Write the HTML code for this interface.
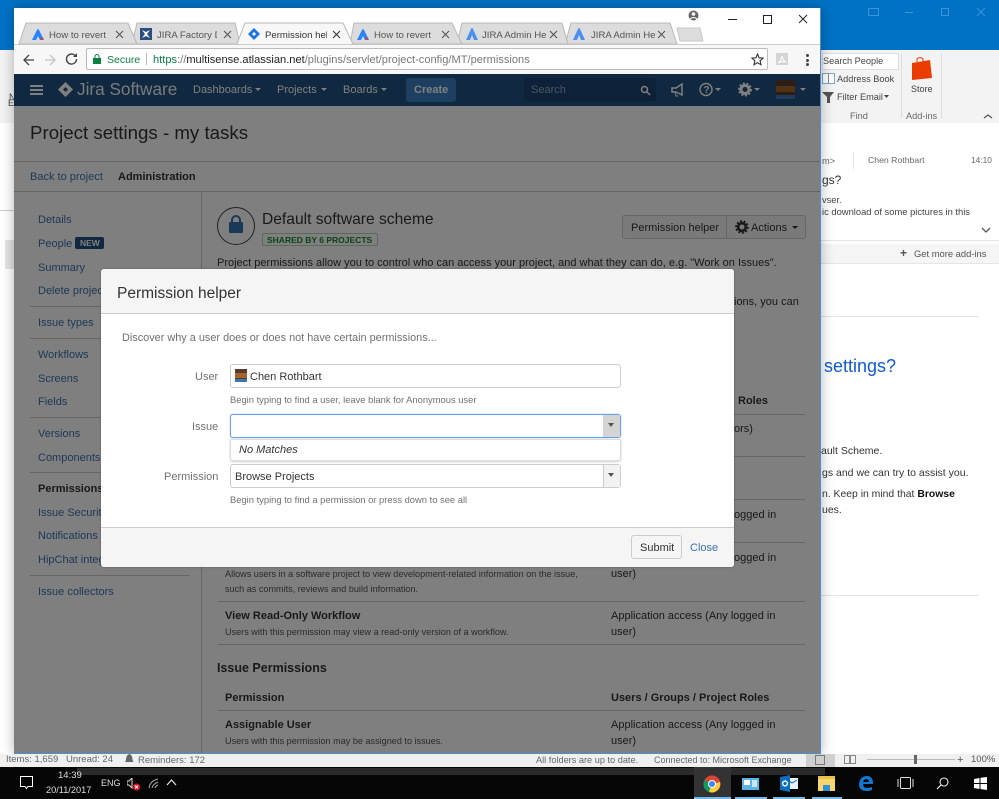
<!DOCTYPE html>
<html><head><meta charset="utf-8"><title>Permission helper</title>
<style>
html,body{margin:0;padding:0;width:999px;height:799px;overflow:hidden;background:#fff;font-family:"Liberation Sans",sans-serif}
div,span,a,svg{position:absolute;box-sizing:border-box}
span span,b span,i span{position:static}
.t{white-space:nowrap;line-height:14px;font-size:12px;color:#333;margin-top:1px}
.o{color:#444;font-size:9.3px}
.s{color:#666;font-size:9.2px;top:752px}
.tab{height:13px;line-height:13px;font-size:9.6px;top:28px;color:#555;overflow:hidden}
.k{margin-top:0;color:#ddd}
.l{color:#3b73af}
.h{height:1px;background:#ccc}
.d{font-size:9.1px;color:#555}
.n{font-weight:bold;font-size:11px;color:#333}
.f{font-size:9.4px;color:#707070}
.tb{background:#fff;border:1px solid #ccc;border-radius:3px}
</style></head><body>
<!-- Outlook behind -->
<div style="left:0;top:0;width:999px;height:50px;background:#0072c6"></div>
<div style="left:0;top:50px;width:999px;height:73px;background:#f3f3f3"></div>
<div style="left:0;top:123px;width:999px;height:631px;background:#fff"></div>
<div style="left:0;top:210px;width:14px;height:1px;background:#ccc"></div>
<div style="left:5px;top:240px;width:9px;height:29px;background:#e4e4e4"></div>
<span class="t o" style="left:9px;top:89px;font-size:9px">N</span><span class="t o" style="left:8px;top:95px;font-size:9px">E</span>
<div style="left:822px;top:53px;width:77px;height:17px;background:#fff;border:1px solid #ddd"></div>
<span class="t o" style="left:823px;top:53px;font-size:9.200px">Search People</span>
<span class="t o" style="left:837px;top:71px;font-size:9.200px">Address Book</span>
<span class="t o" style="left:837px;top:89px;font-size:9.200px">Filter Email</span>
<svg style="left:884px;top:95px" width="6" height="4"><path d="M0 0h5L2.500 3z" fill="#444"/></svg>
<svg style="left:822px;top:73px" width="13" height="12"><rect x=".5" y=".5" width="12" height="10" fill="#fff" stroke="#7aa6cc"/><path d="M6.500 1v9" stroke="#888"/></svg>
<svg style="left:822px;top:91px" width="13" height="12"><path d="M0 1h12L8 6v6H5V6z" fill="#555"/></svg>
<span class="t o" style="left:850px;top:108px;color:#666;font-size:9.200px">Find</span>
<span class="t o" style="left:906px;top:108px;color:#666;font-size:9.200px">Add-ins</span>
<span class="t o" style="left:911px;top:81px;font-size:9px">Store</span>
<div style="left:901px;top:54px;width:1px;height:64px;background:#ddd"></div>
<div style="left:941px;top:54px;width:1px;height:64px;background:#ddd"></div>
<svg style="left:910px;top:55px" width="23" height="26"><path d="M2 8L20 5l2 18-20 2z" fill="#eb3c00"/><path d="M7 7V4q3-3 6 0v3" stroke="#eb3c00" fill="none"/></svg>
<svg style="left:982px;top:112px" width="12" height="8"><path d="M2 6l4-3 4 3" stroke="#555" stroke-width="1.300" fill="none"/></svg>
<div style="left:868px;top:8px;width:11px;height:8px;border:1px solid #3f93d6"></div>
<div style="left:905px;top:12px;width:8px;height:1px;background:#3f93d6"></div>
<div style="left:941px;top:8px;width:8px;height:8px;border:1px solid #3f93d6"></div>
<svg style="left:976px;top:7px" width="10" height="10"><path d="M1 1l8 8M9 1L1 9" stroke="#3f93d6"/></svg>

<span class="t o" style="left:822px;top:153px;color:#666">m&gt;</span>
<div style="left:853px;top:152px;width:1px;height:17px;background:#e5e5e5"></div>
<span class="t o" style="left:868px;top:152px;color:#666;font-size:8.700px">Chen Rothbart</span>
<span class="t o" style="left:971px;top:152px;color:#666;font-size:8.400px">14:10</span>
<span class="t o" style="left:822px;top:172px;font-size:12px;color:#333">gs?</span>
<span class="t o" style="left:822px;top:192px">vser.</span>
<span class="t o" style="left:822px;top:204px;font-size:9.400px">ic download of some pictures in this</span>
<svg style="left:980px;top:226px" width="12" height="8"><path d="M2 2l4 4 4-4" stroke="#555" stroke-width="1.300" fill="none"/></svg>
<div class="h" style="left:821px;top:240px;width:178px;background:#e6e6e6"></div>
<div style="left:821px;top:244px;width:178px;height:20px;background:#f5f5f5;border-bottom:1px solid #e6e6e6"></div>
<span class="t o" style="left:900px;top:245px;color:#555;font-size:12px;font-weight:bold">+</span>
<span class="t o" style="left:914px;top:246px;color:#555;font-size:9.400px">Get more add-ins</span>
<div class="h" style="left:821px;top:316px;width:158px;background:#e4e4e4"></div>
<span class="t o" style="left:824px;top:354px;font-size:18px;line-height:22px;color:#0f5bd0">settings?</span>
<span class="t o" style="left:821px;top:443px;color:#333;font-size:10.500px">ault Scheme.</span>
<span class="t o" style="left:822px;top:465px;color:#333;font-size:10.500px">gs and we can try to assist you.</span>
<span class="t o" style="left:822px;top:487px;color:#333;font-size:10.400px">n. Keep in mind that <b style="color:#111">Browse</b></span>
<span class="t o" style="left:822px;top:502px;color:#333;font-size:10.500px">ues.</span>
<div class="h" style="left:821px;top:595px;width:158px;background:#e4e4e4"></div>

<!-- Chrome -->
<div style="left:14px;top:8px;width:807px;height:746px;background:#fff;border-right:1px solid #4a90d0;box-shadow:0 0 12px rgba(0,0,0,.3)"></div>
<div style="left:14px;top:44px;width:806px;height:1px;background:#cfcfcf"></div>
<div style="left:14px;top:45px;width:806px;height:29px;background:#f7f7f7"></div>

<!-- tabs -->
<svg style="left:14px;top:22px" width="700" height="24">
<g fill="#dcdcdc" stroke="#b8b8b8">
<path d="M551 22L557 1H656L663 22z"/>
<path d="M443 22L448 1H548L554 22z"/>
<path d="M336 22L340 1H438L448 22z"/>
<path d="M118 22L123 1H221L226 22z"/>
<path d="M5 22L12 1H114L123 22z"/>
</g>
<path d="M223 22L231 1H329L339 22" fill="#f7f7f7" stroke="#b8b8b8"/>
<path d="M666 19L663 6H686L689 19z" fill="#dcdcdc" stroke="#c8c8c8"/>
</svg>
<span class="t tab" style="left:49px;width:58px">How to revert</span>
<span class="t tab" style="left:157px;width:60px">JIRA Factory De</span>
<span class="t tab" style="left:265px;width:62px;color:#333">Permission help</span>
<span class="t tab" style="left:374px;width:58px">How to revert</span>
<span class="t tab" style="left:482px;width:64px">JIRA Admin He</span>
<span class="t tab" style="left:591px;width:64px">JIRA Admin He</span>
<svg style="left:32px;top:28px" width="12" height="12"><path d="M0 12L5 2q1-2 2 0l5 10H8L6 8l-2 4z" fill="#2684ff"/><circle cx="10" cy="10.500" r="1.300" fill="#e33"/></svg>
<svg style="left:357px;top:28px" width="12" height="12"><path d="M0 12L5 2q1-2 2 0l5 10H8L6 8l-2 4z" fill="#2684ff"/><circle cx="10" cy="10.500" r="1.300" fill="#e33"/></svg>
<svg style="left:466px;top:27px" width="13" height="13"><path d="M0 13L5 2q1-2 2 0l5 11H8L6 8l-2 5z" fill="#4b8ff0"/></svg>
<svg style="left:573px;top:27px" width="13" height="13"><path d="M0 13L5 2q1-2 2 0l5 11H8L6 8l-2 5z" fill="#4b8ff0"/></svg>
<div style="left:140px;top:28px;width:12px;height:12px;background:#2a4f7c"></div>
<svg style="left:140px;top:28px" width="12" height="12"><path d="M2 2l3 4-3 4 4-2 4 2-3-4 3-4-4 2z" fill="#fff"/></svg>
<svg style="left:248px;top:28px" width="12" height="12"><path d="M6 0l6 6-6 6-6-6z" fill="#1a73e8"/><path d="M6 4l2 2-2 2-2-2z" fill="#fff"/></svg>
<svg style="left:115px;top:30px" width="9" height="9"><path d="M1 1l7 7M8 1L1 8" stroke="#555" stroke-width="1.100"/></svg>
<svg style="left:223px;top:30px" width="9" height="9"><path d="M1 1l7 7M8 1L1 8" stroke="#555" stroke-width="1.100"/></svg>
<svg style="left:332px;top:30px" width="9" height="9"><path d="M1 1l7 7M8 1L1 8" stroke="#333" stroke-width="1.100"/></svg>
<svg style="left:441px;top:30px" width="9" height="9"><path d="M1 1l7 7M8 1L1 8" stroke="#555" stroke-width="1.100"/></svg>
<svg style="left:549px;top:30px" width="9" height="9"><path d="M1 1l7 7M8 1L1 8" stroke="#555" stroke-width="1.100"/></svg>
<svg style="left:657px;top:30px" width="9" height="9"><path d="M1 1l7 7M8 1L1 8" stroke="#555" stroke-width="1.100"/></svg>
<!-- window controls -->
<svg style="left:688px;top:10px" width="11" height="11"><circle cx="5.500" cy="5.500" r="5" fill="#666"/><circle cx="5.500" cy="4" r="1.800" fill="#fff"/><path d="M2 9q3.500-3 7 0" stroke="#fff" fill="none"/></svg>
<div style="left:728px;top:19px;width:9px;height:1px;background:#222"></div>
<div style="left:763px;top:15px;width:9px;height:9px;border:1px solid #222"></div>
<svg style="left:798px;top:14px" width="10" height="10"><path d="M1 1l8 8M9 1L1 9" stroke="#222"/></svg>
<!-- toolbar -->
<svg style="left:22px;top:53px" width="70" height="14"><path d="M2 7h10M7 2L2 7l5 5" stroke="#444" stroke-width="1.300" fill="none"/><path d="M23 7h10M28 2l5 5-5 5" stroke="#c4c4c4" stroke-width="1.300" fill="none"/></svg>
<svg style="left:65px;top:52px" width="14" height="14"><path d="M11.500 7a5 5 0 1 1-1.500-3.500" stroke="#444" stroke-width="1.400" fill="none"/><path d="M12 1v4H8z" fill="#444"/></svg>
<div style="left:86px;top:48px;width:682px;height:22px;background:#fff;border:1px solid #bbb;border-radius:2px"></div>
<svg style="left:93px;top:54px" width="9" height="10"><rect y="4" width="8" height="6" fill="#0b8043"/><path d="M2 4V2.500a2 2 0 0 1 4 0V4" stroke="#0b8043" fill="none"/></svg>
<span class="t" style="left:107px;top:52px;font-size:10.500px;color:#0b8043">Secure</span>
<div style="left:146px;top:53px;width:1px;height:12px;background:#bbb"></div>
<span class="t" style="left:153px;top:52px;font-size:11.100px;color:#777"><span style="color:#0b8043">https</span>://<span style="color:#222">multisense.atlassian.net</span>/plugins/servlet/project-config/MT/permissions</span>
<svg style="left:751px;top:53px" width="13" height="13"><path d="M6.500 1l1.600 3.800 4 .3-3 2.700.9 4L6.500 9.700 3 11.800l.9-4-3-2.700 4-.3z" fill="none" stroke="#333" stroke-width="1.100"/></svg>
<div style="left:776px;top:53px;width:12px;height:12px;background:#d4d4d4"></div>
<svg style="left:776px;top:53px" width="12" height="12"><path d="M2 10q3-2 4-7 1 5 4 6-5-1-8 1z" fill="none" stroke="#fff"/></svg>
<div style="left:806px;top:54px;width:3px;height:3px;background:#444;border-radius:2px"></div>
<div style="left:806px;top:59px;width:3px;height:3px;background:#444;border-radius:2px"></div>
<div style="left:806px;top:63px;width:3px;height:3px;background:#444;border-radius:2px"></div>

<!-- Jira page -->
<div style="left:14px;top:74px;width:806px;height:32px;background:#205081"></div>
<div style="left:14px;top:106px;width:806px;height:648px;background:#fff"></div>
<div style="left:30px;top:85px;width:13px;height:2px;background:#fff"></div><div style="left:30px;top:89px;width:13px;height:2px;background:#fff"></div><div style="left:30px;top:93px;width:13px;height:2px;background:#fff"></div>
<svg style="left:58px;top:82px" width="15" height="15"><path d="M7.500 0l7.500 7.500-7.500 7.500L0 7.500z" fill="#fff"/><path d="M7.500 5l2.500 2.500-2.500 2.500L5 7.500z" fill="#205081"/></svg>
<span class="t" style="left:77px;top:79px;font-size:17.200px;line-height:19px;color:#fff;opacity:.95">Jira Software</span>
<span class="t" style="left:193px;top:82px;font-size:11px;color:#fff">Dashboards</span>
<svg style="left:255px;top:88px" width="7" height="4"><path d="M0 0h6L3 3z" fill="#fff"/></svg>
<span class="t" style="left:277px;top:82px;font-size:11px;color:#fff">Projects</span>
<svg style="left:321px;top:88px" width="7" height="4"><path d="M0 0h6L3 3z" fill="#fff"/></svg>
<span class="t" style="left:343px;top:82px;font-size:11px;color:#fff">Boards</span>
<svg style="left:381px;top:88px" width="7" height="4"><path d="M0 0h6L3 3z" fill="#fff"/></svg>
<div style="left:406px;top:78px;width:50px;height:24px;background:#3b7fc4;border-radius:3px"></div>
<span class="t" style="left:414px;top:82px;font-size:11px;font-weight:bold;color:#fff">Create</span>
<div style="left:524px;top:78px;width:132px;height:23px;background:#1a4570;border-radius:3px"></div>
<span class="t" style="left:531px;top:82px;font-size:11px;color:#99adc2">Search</span>
<svg style="left:640px;top:85px" width="11" height="11"><circle cx="4.500" cy="4.500" r="3" stroke="#fff" stroke-width="1.500" fill="none"/><path d="M7 7l3 3" stroke="#fff" stroke-width="1.500"/></svg>
<svg style="left:671px;top:83px" width="14" height="14"><path d="M1 5h4l6-4v11L5 9H1z" fill="none" stroke="#fff" stroke-width="1.500"/><path d="M4 9l1 4h2" stroke="#fff" fill="none"/></svg>
<svg style="left:699px;top:82px" width="24" height="15"><circle cx="7" cy="7.500" r="6" fill="none" stroke="#fff" stroke-width="1.400"/><text x="4.500" y="11" font-size="10" font-weight="bold" fill="#fff" font-family="Liberation Sans">?</text><path d="M16 6h6l-3 3z" fill="#fff"/></svg>
<svg style="left:738px;top:82px" width="24" height="15"><circle cx="7" cy="7.500" r="4" fill="none" stroke="#fff" stroke-width="3"/><circle cx="7" cy="7.500" r="6" fill="none" stroke="#fff" stroke-width="2" stroke-dasharray="2 1.700"/><path d="M16 6h6l-3 3z" fill="#fff"/></svg>
<svg style="left:776px;top:80px" width="30" height="19"><rect width="19" height="19" fill="#5a3a2a" rx="2"/><rect y="6" width="19" height="6" fill="#a5652a"/><rect y="15" width="19" height="4" fill="#3a78b8"/><path d="M24 8h6l-3 3z" fill="#fff"/></svg>

<div class="t" style="left:30px;top:121px;font-size:18.700px;line-height:22px;color:#333">Project settings - my tasks</div>
<div class="h" style="left:14px;top:161px;width:806px"></div>
<span class="t l" style="left:30px;top:169px;font-size:11px">Back to project</span>
<span class="t" style="left:118px;top:169px;font-size:11px;font-weight:bold">Administration</span>
<div class="h" style="left:14px;top:191px;width:806px"></div>
<div style="left:201px;top:192px;width:1px;height:562px;background:#ccc"></div>

<span class="t l" style="left:38px;top:212px;font-size:11px">Details</span>
<span class="t l" style="left:38px;top:236px;font-size:11px">People</span>
<div style="left:75px;top:237px;width:29px;height:12px;background:#205081;border-radius:2px"></div>
<span class="t" style="left:80px;top:235px;font-size:8.500px;font-weight:bold;color:#fff">NEW</span>
<span class="t l" style="left:38px;top:260px;font-size:11px">Summary</span>
<span class="t l" style="left:38px;top:283px;font-size:11px">Delete project</span>
<div class="h" style="left:30px;top:306px;width:160px"></div>
<span class="t l" style="left:38px;top:315px;font-size:11px">Issue types</span>
<div class="h" style="left:30px;top:338px;width:160px"></div>
<span class="t l" style="left:38px;top:347px;font-size:11px">Workflows</span>
<span class="t l" style="left:38px;top:371px;font-size:11px">Screens</span>
<span class="t l" style="left:38px;top:394px;font-size:11px">Fields</span>
<div class="h" style="left:30px;top:417px;width:160px"></div>
<span class="t l" style="left:38px;top:426px;font-size:11px">Versions</span>
<span class="t l" style="left:38px;top:450px;font-size:11px">Components</span>
<div class="h" style="left:30px;top:472px;width:160px"></div>
<span class="t" style="left:38px;top:481px;font-size:11px;font-weight:bold">Permissions</span>
<span class="t l" style="left:38px;top:505px;font-size:11px">Issue Security</span>
<span class="t l" style="left:38px;top:528px;font-size:11px">Notifications</span>
<span class="t l" style="left:38px;top:552px;font-size:11px">HipChat integration</span>
<div class="h" style="left:30px;top:575px;width:160px"></div>
<span class="t l" style="left:38px;top:584px;font-size:11px">Issue collectors</span>

<div style="left:217px;top:207px;width:38px;height:38px;border:1.500px solid #444;border-radius:50%"></div>
<svg style="left:229px;top:215px" width="14" height="19"><rect x="0" y="7" width="14" height="11" rx="1" fill="#3572b0"/><path d="M3 8V5a4 4 0 0 1 8 0v3" fill="none" stroke="#3572b0" stroke-width="2"/></svg>
<span class="t" style="left:262px;top:210px;font-size:15.600px;line-height:18px">Default software scheme</span>
<div style="left:262px;top:233px;width:116px;height:13px;border:1px solid #b2d8b9;border-radius:2px"></div>
<span class="t" style="left:267px;top:232px;font-size:8.500px;font-weight:bold;color:#14892c">SHARED BY 6 PROJECTS</span>
<div style="left:622px;top:215px;width:184px;height:24px;background:#f5f5f5;border:1px solid #ccc;border-radius:3px"></div>
<div style="left:726px;top:216px;width:1px;height:22px;background:#ccc"></div>
<span class="t" style="left:631px;top:220px;font-size:11px">Permission helper</span>
<svg style="left:735px;top:220px" width="14" height="14"><circle cx="7" cy="7" r="3.800" fill="none" stroke="#333" stroke-width="2.600"/><circle cx="7" cy="7" r="5.800" fill="none" stroke="#333" stroke-width="2" stroke-dasharray="2 1.600"/></svg>
<span class="t" style="left:751px;top:220px;font-size:11px">Actions</span>
<svg style="left:792px;top:226px" width="7" height="4"><path d="M0 0h6L3 3z" fill="#333"/></svg>
<span class="t" style="left:217px;top:255px;font-size:11px">Project permissions allow you to control who can access your project, and what they can do, e.g. "Work on Issues".</span>
<span class="t" style="left:734px;top:294px;font-size:11px">ions, you can</span>
<span class="t" style="left:738px;top:393px;font-size:11px;font-weight:bold">Roles</span>
<div class="h" style="left:218px;top:414px;width:587px"></div>
<span class="t" style="left:734px;top:421px;font-size:11px">ors)</span>
<div class="h" style="left:218px;top:456px;width:587px"></div>
<div class="h" style="left:218px;top:499px;width:587px"></div>
<span class="t" style="left:734px;top:507px;font-size:11px">ogged in</span>
<div class="h" style="left:218px;top:542px;width:587px"></div>
<span class="t" style="left:734px;top:550px;font-size:11px">ogged in</span>
<span class="t" style="left:611px;top:566px;font-size:11px">user)</span>
<span class="t d" style="left:225px;top:566px">Allows users in a software project to view development-related information on the issue,</span>
<span class="t d" style="left:225px;top:581px">such as commits, reviews and build information.</span>
<div class="h" style="left:218px;top:601px;width:587px"></div>
<span class="t n" style="left:225px;top:608px">View Read-Only Workflow</span>
<span class="t" style="left:611px;top:608px;font-size:11px">Application access (Any logged in</span>
<span class="t d" style="left:225px;top:624px">Users with this permission may view a read-only version of a workflow.</span>
<span class="t" style="left:611px;top:624px;font-size:11px">user)</span>
<div class="h" style="left:218px;top:644px;width:587px"></div>
<span class="t n" style="left:217px;top:660px;font-size:12.500px">Issue Permissions</span>
<span class="t n" style="left:225px;top:690px">Permission</span>
<span class="t n" style="left:611px;top:690px">Users / Groups / Project Roles</span>
<div class="h" style="left:218px;top:710px;width:587px"></div>
<span class="t n" style="left:225px;top:717px">Assignable User</span>
<span class="t" style="left:611px;top:717px;font-size:11px">Application access (Any logged in</span>
<span class="t d" style="left:225px;top:733px">Users with this permission may be assigned to issues.</span>
<span class="t" style="left:611px;top:733px;font-size:11px">user)</span>

<!-- Overlay -->
<div style="left:14px;top:74px;width:806px;height:680px;background:rgba(0,0,0,.5)"></div>
<div style="left:14px;top:753px;width:807px;height:1px;background:#4a90d0"></div>

<!-- Dialog -->
<div style="left:101px;top:269px;width:633px;height:298px;background:#fff;border-radius:3px;box-shadow:0 0 2px rgba(0,0,0,.3)"></div>
<div style="left:101px;top:269px;width:633px;height:45px;background:#f5f5f5;border-bottom:1px solid #ccc;border-radius:3px 3px 0 0"></div>
<span class="t" style="left:117px;top:283px;font-size:15.500px;line-height:20px">Permission helper</span>
<span class="t" style="left:122px;top:330px;font-size:10.900px;color:#707070">Discover why a user does or does not have certain permissions...</span>

<span class="t" style="left:195px;top:369px;font-size:11px;color:#707070">User</span>
<div class="tb" style="left:230px;top:364px;width:391px;height:24px"></div>
<svg style="left:235px;top:369px" width="12" height="13"><rect width="12" height="13" fill="#5a3a2a"/><rect y="4" width="12" height="5" fill="#a5652a"/><rect y="10" width="12" height="3" fill="#3a78b8"/></svg>
<span class="t" style="left:250px;top:369px;font-size:11px">Chen Rothbart</span>
<span class="t f" style="left:230px;top:392px">Begin typing to find a user, leave blank for Anonymous user</span>

<span class="t" style="left:192px;top:419px;font-size:11px;color:#707070">Issue</span>
<div class="tb" style="left:230px;top:414px;width:391px;height:24px;border-color:#6aa1e6;box-shadow:0 0 1px #6aa1e6"></div>
<div style="left:603px;top:415px;width:17px;height:22px;background:#d4d4d4"></div>
<svg style="left:607px;top:423px" width="8" height="5"><path d="M1 0h6L4 4z" fill="#555"/></svg>
<div style="left:230px;top:439px;width:391px;height:22px;background:#fff;border:1px solid #ddd;border-radius:0 0 3px 3px;box-shadow:0 1px 2px rgba(0,0,0,.2)"></div>
<span class="t" style="left:239px;top:442px;font-size:11px;font-style:italic">No Matches</span>

<span class="t" style="left:164px;top:469px;font-size:11px;color:#707070">Permission</span>
<div class="tb" style="left:230px;top:464px;width:391px;height:24px"></div>
<div style="left:603px;top:465px;width:17px;height:22px;background:#f2f2f2;border-left:1px solid #ccc"></div>
<svg style="left:607px;top:473px" width="8" height="5"><path d="M1 0h6L4 4z" fill="#555"/></svg>
<span class="t" style="left:235px;top:469px;font-size:11px">Browse Projects</span>
<span class="t f" style="left:230px;top:492px">Begin typing to find a permission or press down to see all</span>

<div style="left:101px;top:527px;width:633px;height:40px;background:#f5f5f5;border-top:1px solid #ccc;border-radius:0 0 3px 3px"></div>
<div style="left:631px;top:535px;width:51px;height:24px;background:#f5f5f5;border:1px solid #ccc;border-radius:3px"></div>
<span class="t" style="left:640px;top:540px;font-size:11px">Submit</span>
<span class="t l" style="left:690px;top:540px;font-size:11px">Close</span>

<!-- Status bar -->
<div style="left:0;top:754px;width:999px;height:13px;background:#f0f0f0"></div>
<span class="t s" style="left:6px;font-size:9.500px">Items: 1,659</span>
<span class="t s" style="left:66px;font-size:9.500px">Unread: 24</span>
<svg style="left:125px;top:754px" width="9" height="10"><path d="M4.500 0q3 1 3 6l1 2H0l1-2q0-5 3.500-6z" fill="#666"/></svg>
<span class="t s" style="left:138px;top:753px;font-size:9.500px">Reminders: 172</span>
<span class="t s" style="left:536px">All folders are up to date.</span>
<span class="t s" style="left:654px;font-size:9px">Connected to: Microsoft Exchange</span>
<div style="left:806px;top:754px;width:29px;height:13px;background:#cfcfcf"></div>
<div style="left:815px;top:755px;width:10px;height:10px;border:1px solid #777"></div>
<svg style="left:844px;top:754px" width="12" height="11"><path d="M.5 1.500h5v8h-5zM6.500 1.500h5v8h-5z" fill="none" stroke="#888"/></svg>
<div style="left:869px;top:759px;width:5px;height:1px;background:#555"></div>
<div style="left:867px;top:759px;width:88px;height:1px;background:#bbb"></div>
<div style="left:914px;top:755px;width:3px;height:9px;background:#666"></div>
<span class="t s" style="left:957px;font-size:11px;color:#555">+</span>
<span class="t s" style="left:971px;color:#555;font-size:9.500px">100%</span>

<!-- Taskbar -->
<div style="left:0;top:767px;width:999px;height:32px;background:#060606"></div>
<div style="left:77px;top:768px;width:748px;height:7px;background:#2b2b2b"></div>
<div style="left:694px;top:767px;width:37px;height:32px;background:#333"></div>
<div style="left:694px;top:797px;width:37px;height:2px;background:#7ab8e8"></div>
<div style="left:735px;top:797px;width:32px;height:2px;background:#7ab8e8"></div>
<div style="left:773px;top:797px;width:32px;height:2px;background:#7ab8e8"></div>
<div style="left:812px;top:797px;width:30px;height:2px;background:#7ab8e8"></div>
<svg style="left:20px;top:776px" width="13" height="14"><path d="M.5.500h12v10H8l-1.500 2-1.500-2H.5z" fill="none" stroke="#fff"/></svg>
<span class="t k" style="left:58px;top:770px;font-size:9.500px;line-height:12px">14:39</span>
<span class="t k" style="left:46px;top:784px;font-size:9.200px;line-height:12px">20/11/2017</span>
<span class="t k" style="left:101px;top:777px;font-size:9px;line-height:12px">ENG</span>
<svg style="left:127px;top:778px" width="14" height="14"><path d="M0 3h2l3-3v10L2 7H0z" fill="none" stroke="#ddd"/><circle cx="9.500" cy="9" r="3.500" fill="#e81123"/><path d="M8 7.500l3 3M11 7.500l-3 3" stroke="#fff"/></svg>
<svg style="left:148px;top:778px" width="11" height="11"><path d="M1 10Q2 3 10 1M4 10q1-4 6-6M7 10q.5-2 3-3" fill="none" stroke="#aaa"/></svg>
<svg style="left:166px;top:779px" width="11" height="7"><path d="M1 6l4.500-5L10 6" fill="none" stroke="#eee" stroke-width="1.100"/></svg>
<svg style="left:703px;top:775px" width="18" height="18"><circle cx="9" cy="9" r="8.500" fill="#db4437"/><path d="M9 9L1.500 5A8.500 8.500 0 0 0 6 17z" fill="#0f9d58"/><path d="M9 9l-3 8A8.500 8.500 0 0 0 17 7z" fill="#ffcd40"/><circle cx="9" cy="9" r="4" fill="#fff"/><circle cx="9" cy="9" r="3" fill="#4285f4"/></svg>
<svg style="left:742px;top:778px" width="17" height="12"><rect width="17" height="12" fill="#5ab4e8"/><rect x="2" y="2" width="6" height="5" fill="#fff"/><rect x="10" y="2" width="5" height="7" fill="#cce6f5"/></svg>
<svg style="left:780px;top:775px" width="18" height="17"><rect x="7" y="3" width="11" height="11" fill="#eaf3fb"/><path d="M8 5l4 3 5-3" stroke="#0a6ebd" fill="none"/><path d="M0 2l10-2v17L0 15z" fill="#0a6ebd"/><circle cx="5" cy="8.500" r="2.400" fill="none" stroke="#fff" stroke-width="1.400"/></svg>
<svg style="left:818px;top:776px" width="18" height="15"><rect width="17" height="15" fill="#f5d76e"/><rect y="0" width="17" height="3" fill="#e8c04a"/><rect x="5" y="9" width="7" height="6" fill="#2f8fd8"/></svg>
<svg style="left:858px;top:775px" width="16" height="17"><path d="M1 9Q2 1 9 1q6 0 6 8H5q0 4 4 4 3 0 5-1v3q-2 1-5 1-8 0-8-7zm4-2h6q0-3-3-3-2 0-3 3z" fill="#0f78d7"/></svg>
<svg style="left:897px;top:777px" width="17" height="13"><rect x="3.500" y=".5" width="10" height="11" rx="1" fill="none" stroke="#ddd"/><path d="M1 2v8M16 2v8" stroke="#ddd"/></svg>
<svg style="left:936px;top:777px" width="13" height="13"><circle cx="8" cy="5" r="4" fill="none" stroke="#eee" stroke-width="1.100"/><path d="M5 8l-4 4" stroke="#eee" stroke-width="1.200"/></svg>
<svg style="left:974px;top:777px" width="13" height="13"><path d="M0 2l5.500-1v5H0zM6.500.8L13 0v6H6.500zM0 7h5.500v5L0 11zM6.500 7H13v6l-6.500-1z" fill="#fff"/></svg>
</body></html>
